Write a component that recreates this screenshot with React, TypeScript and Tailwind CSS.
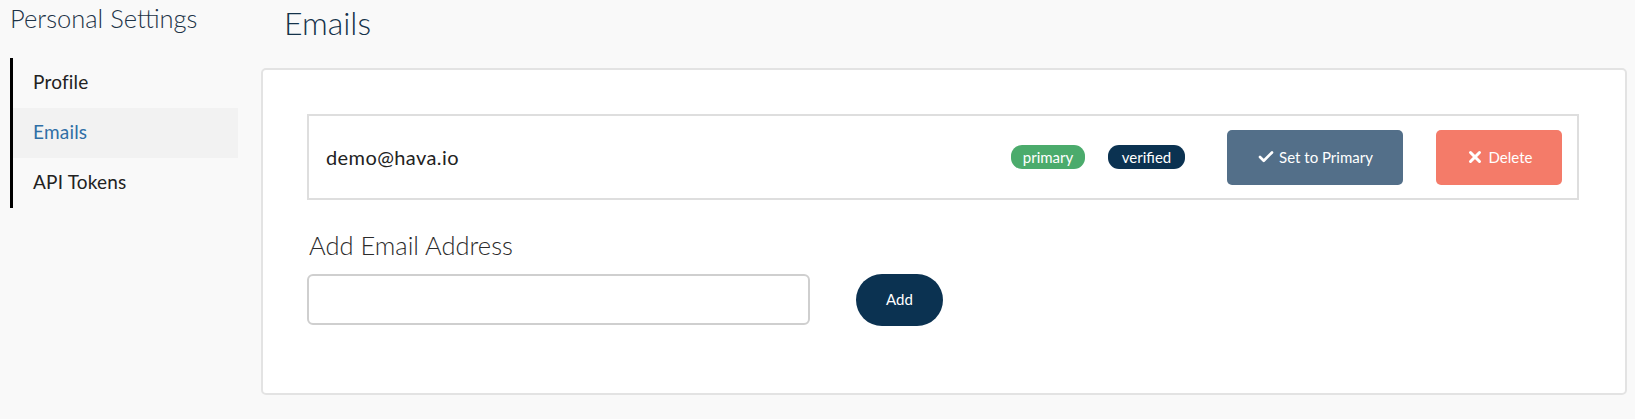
import { Check, X } from 'lucide-react';

const navItems = ['Profile', 'Emails', 'API Tokens'];

export default function App() {
  return (
    <div className="flex h-[419px] w-[1635px] bg-[#f9f9f9] font-['Lato',sans-serif] overflow-hidden">
      {/* Sidebar */}
      <aside className="w-[261px] shrink-0 pl-[10px]">
        <h2 className="text-[25.5px] font-light leading-none text-[#1d3347] pt-[6px]">Personal Settings</h2>
        <nav className="mt-[26px] border-l-[3px] border-black">
          {navItems.map((item) => (
            <div
              key={item}
              className={
                item === 'Emails'
                  ? 'h-[50px] w-[225px] flex items-center pl-[20px] bg-[#f2f2f2] text-[19px] tracking-[0.2px] text-[#2f6fa6]'
                  : 'h-[50px] w-[225px] flex items-center pl-[20px] text-[19px] tracking-[0.2px] text-[#222]'
              }
            >
              {item}
            </div>
          ))}
        </nav>
      </aside>

      {/* Main */}
      <main className="flex-1 pr-[8px]">
        <h1 className="text-[32px] font-light leading-none text-[#14324a] pl-[23px] pt-[7px] h-[68px]">Emails</h1>
        <section className="h-[327px] bg-white border-2 border-[#e3e3e3] rounded-[5px] pt-[44px] pl-[44px] pr-[46px]">
          <div className="h-[86px] border-2 border-[#dedede] flex items-center pl-[17px] pr-[15px]">
            <span className="flex-1 text-[20px] tracking-[0.4px] text-[#222]">demo@hava.io</span>
            <span className="h-[24px] w-[74px] rounded-[11px] bg-[#4bab6c] text-white text-[15px] flex items-center justify-center">primary</span>
            <span className="ml-[23px] h-[24px] w-[77px] rounded-[11px] bg-[#0b3251] text-white text-[15px] flex items-center justify-center">verified</span>
            <button className="ml-[42px] h-[55px] w-[176px] rounded-[5px] bg-[#536f89] text-white text-[15px] flex items-center justify-center gap-[4px]">
              <Check size={18} strokeWidth={3.5} />
              Set to Primary
            </button>
            <button className="ml-[33px] h-[55px] w-[126px] rounded-[5px] bg-[#f47b69] text-white text-[15px] flex items-center justify-center gap-[5px]">
              <X size={18} strokeWidth={4} />
              Delete
            </button>
          </div>

          <h3 className="mt-[33px] text-[25.5px] font-light leading-none text-[#2b2b2b] pl-[2px]">Add Email Address</h3>
          <div className="mt-[15px] flex items-center">
            <input
              type="text"
              className="h-[51px] w-[503px] rounded-[6px] border-2 border-[#cfcfcf] bg-white outline-none px-3"
            />
            <button className="ml-[46px] h-[52px] w-[87px] rounded-full bg-[#0b3251] text-white text-[15px]">Add</button>
          </div>
        </section>
      </main>
    </div>
  );
}
